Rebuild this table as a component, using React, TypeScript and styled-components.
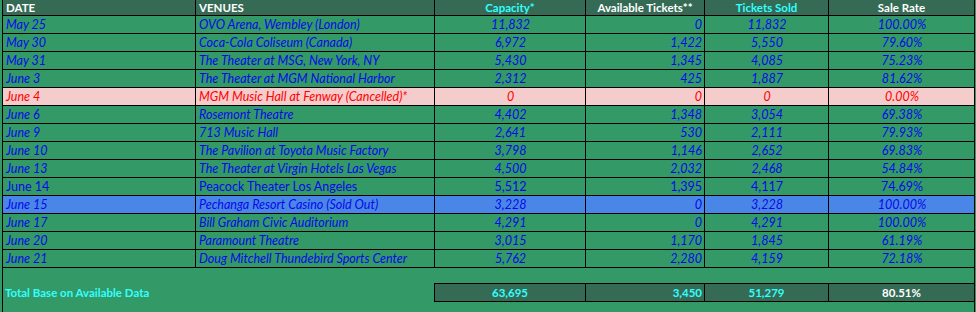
import styled, { createGlobalStyle } from "styled-components";

const GlobalStyle = createGlobalStyle`
    html, body {
        margin: 0;
        padding: 0;
        background: #339966;
    }
    body {
        font-family: Lato, "Liberation Sans", sans-serif;
    }
`;

const COLS = "193px 239px 151px 119px 124px 145px";

type Tone = "normal" | "cancelled" | "soldout";

interface Show {
    date: string;
    venue: string;
    capacity: string;
    available: string;
    sold: string;
    rate: string;
    tone?: Tone;
    upright?: boolean;
}

const shows: Show[] = [
    { date: "May 25", venue: "OVO Arena, Wembley (London)", capacity: "11,832", available: "0", sold: "11,832", rate: "100.00%" },
    { date: "May 30", venue: "Coca-Cola Coliseum (Canada)", capacity: "6,972", available: "1,422", sold: "5,550", rate: "79.60%" },
    { date: "May 31", venue: "The Theater at MSG, New York, NY", capacity: "5,430", available: "1,345", sold: "4,085", rate: "75.23%" },
    { date: "June 3", venue: "The Theater at MGM National Harbor", capacity: "2,312", available: "425", sold: "1,887", rate: "81.62%" },
    { date: "June 4", venue: "MGM Music Hall at Fenway (Cancelled)*", capacity: "0", available: "0", sold: "0", rate: "0.00%", tone: "cancelled" },
    { date: "June 6", venue: "Rosemont Theatre", capacity: "4,402", available: "1,348", sold: "3,054", rate: "69.38%" },
    { date: "June 9", venue: "713 Music Hall", capacity: "2,641", available: "530", sold: "2,111", rate: "79.93%" },
    { date: "June 10", venue: "The Pavilion at Toyota Music Factory", capacity: "3,798", available: "1,146", sold: "2,652", rate: "69.83%" },
    { date: "June 13", venue: "The Theater at Virgin Hotels Las Vegas", capacity: "4,500", available: "2,032", sold: "2,468", rate: "54.84%" },
    { date: "June 14", venue: "Peacock Theater Los Angeles", capacity: "5,512", available: "1,395", sold: "4,117", rate: "74.69%", upright: true },
    { date: "June 15", venue: "Pechanga Resort Casino (Sold Out)", capacity: "3,228", available: "0", sold: "3,228", rate: "100.00%", tone: "soldout" },
    { date: "June 17", venue: "Bill Graham Civic Auditorium", capacity: "4,291", available: "0", sold: "4,291", rate: "100.00%" },
    { date: "June 20", venue: "Paramount Theatre", capacity: "3,015", available: "1,170", sold: "1,845", rate: "61.19%" },
    { date: "June 21", venue: "Doug Mitchell Thundebird Sports Center", capacity: "5,762", available: "2,280", sold: "4,159", rate: "72.18%" },
];

const rowBg: Record<Tone, string> = {
    normal: "#339966",
    cancelled: "#f4cccc",
    soldout: "#4a86e8",
};

const Sheet = styled.div`
    width: 973px;
    height: 312px;
    margin-left: 2px;
    box-sizing: border-box;
    border-left: 1px solid #000;
    border-right: 1px solid #000;
    background: #339966;
    font-size: 11.5px;
`;

const Grid = styled.div`
    display: grid;
    grid-template-columns: ${COLS};
`;

type Align = "left" | "center" | "right";

const justify: Record<Align, string> = {
    left: "flex-start",
    center: "center",
    right: "flex-end",
};

const HeadCell = styled.div<{ $align?: Align; $accent?: boolean; $last?: boolean }>`
    height: 15px;
    display: flex;
    align-items: center;
    justify-content: ${(p) => justify[p.$align || "center"]};
    padding: 0 3px;
    background: #356a55;
    border-bottom: 1px solid #000;
    border-right: ${(p) => (p.$last ? "none" : "1px solid #000")};
    color: ${(p) => (p.$accent ? "#33ffff" : "#ffffff")};
    font-weight: 700;
    white-space: nowrap;
`;

const Cell = styled.div<{ $align?: Align; $tone: Tone; $upright?: boolean; $last?: boolean }>`
    height: 17px;
    display: flex;
    align-items: center;
    justify-content: ${(p) => justify[p.$align || "center"]};
    padding: 0 2px 0 3px;
    background: ${(p) => rowBg[p.$tone]};
    border-bottom: 1px solid #000;
    border-right: ${(p) => (p.$last ? "none" : "1px solid #000")};
    color: ${(p) => (p.$tone === "cancelled" ? "#ff0000" : "#0808ec")};
    font-size: 12.5px;
    font-style: ${(p) => (p.$upright ? "normal" : "italic")};
    white-space: nowrap;
    overflow: hidden;
`;

const TotalSection = styled.div`
    display: flex;
    padding-top: 15px;
`;

const TotalLabel = styled.div`
    width: 431px;
    height: 19px;
    display: flex;
    align-items: center;
    padding-left: 2px;
    box-sizing: border-box;
    color: #33ffff;
    font-weight: 700;
`;

const TotalBox = styled.div`
    display: grid;
    grid-template-columns: 151px 119px 124px 145px;
    border-top: 1px solid #000;
    border-bottom: 1px solid #000;
    border-left: 1px solid #000;
    background: #356a55;
`;

const TotalCell = styled.div<{ $align?: Align; $white?: boolean; $last?: boolean }>`
    height: 17px;
    display: flex;
    align-items: center;
    justify-content: ${(p) => justify[p.$align || "center"]};
    padding: 0 2px;
    border-right: ${(p) => (p.$last ? "none" : "1px solid #000")};
    color: ${(p) => (p.$white ? "#ffffff" : "#33ffff")};
    font-weight: 700;
`;

const ShowRow = ({ show }: { show: Show }) => {
    const tone = show.tone || "normal";
    const upright = show.upright;
    return (
        <>
            <Cell $tone={tone} $upright={upright} $align="left">
                {show.date}
            </Cell>
            <Cell $tone={tone} $upright={upright} $align="left">
                {show.venue}
            </Cell>
            <Cell $tone={tone} $upright={upright}>
                {show.capacity}
            </Cell>
            <Cell $tone={tone} $upright={upright} $align="right">
                {show.available}
            </Cell>
            <Cell $tone={tone} $upright={upright}>
                {show.sold}
            </Cell>
            <Cell $tone={tone} $upright={upright} $last>
                {show.rate}
            </Cell>
        </>
    );
};

export default function App() {
    return (
        <>
            <GlobalStyle />
            <Sheet>
                <Grid>
                    <HeadCell $align="left">DATE</HeadCell>
                    <HeadCell $align="left">VENUES</HeadCell>
                    <HeadCell $accent>Capacity*</HeadCell>
                    <HeadCell>Available Tickets**</HeadCell>
                    <HeadCell $accent>Tickets Sold</HeadCell>
                    <HeadCell $last>Sale Rate</HeadCell>
                    {shows.map((show) => (
                        <ShowRow show={show} key={show.date} />
                    ))}
                </Grid>
                <TotalSection>
                    <TotalLabel>Total Base on Available Data</TotalLabel>
                    <TotalBox>
                        <TotalCell>63,695</TotalCell>
                        <TotalCell $align="right">3,450</TotalCell>
                        <TotalCell>51,279</TotalCell>
                        <TotalCell $white $last>
                            80.51%
                        </TotalCell>
                    </TotalBox>
                </TotalSection>
            </Sheet>
        </>
    );
}
